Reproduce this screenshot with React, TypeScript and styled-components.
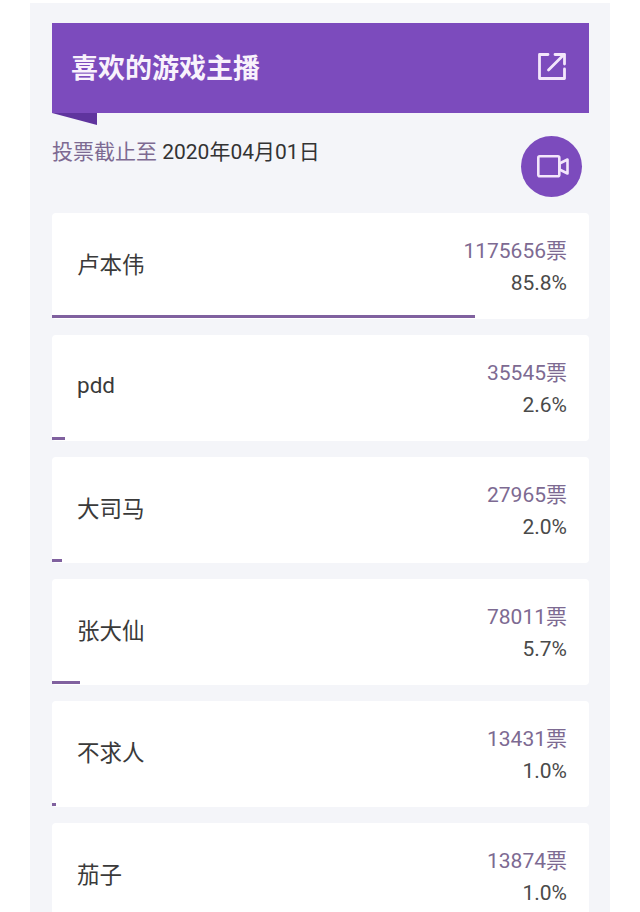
import React from "react";
import styled, { createGlobalStyle } from "styled-components";

const GlobalStyle = createGlobalStyle`
  html, body {
    margin: 0;
    padding: 0;
    background: #fff;
    overflow: hidden;
  }
  body {
    font-family: Roboto, "Noto Sans CJK SC", sans-serif;
  }
`;

const voteList = [
  { name: "卢本伟", votes: 1175656, percent: "85.8%", bar: 423 },
  { name: "pdd", votes: 35545, percent: "2.6%", bar: 13 },
  { name: "大司马", votes: 27965, percent: "2.0%", bar: 10 },
  { name: "张大仙", votes: 78011, percent: "5.7%", bar: 28 },
  { name: "不求人", votes: 13431, percent: "1.0%", bar: 4 },
  { name: "茄子", votes: 13874, percent: "1.0%", bar: 4 },
];

const App: React.FC = () => {
  return (
    <Page>
      <GlobalStyle />
      <Panel>
        <Banner>
          <BannerTitle>喜欢的游戏主播</BannerTitle>
          <ShareIcon width="30" height="29" viewBox="0 0 30 29" fill="none" stroke="#f3e6fb" strokeWidth="2.8" strokeLinecap="round" strokeLinejoin="round">
            <path d="M11 2.5H2.5v24h25V17" />
            <path d="M11.5 18L27 2.5" />
            <path d="M18 2.5h9.5V12" />
          </ShareIcon>
          <BannerTail />
        </Banner>
        <DeadlineRow>
          <Deadline>
            <DeadlineLabel>投票截止至</DeadlineLabel> 2020年04月01日
          </Deadline>
          <VideoButton>
            <VideoIcon width="33" height="23" viewBox="0 0 33 23" fill="none" stroke="#f3e6fb" strokeWidth="2.6" strokeLinejoin="round">
              <rect x="1.3" y="1.3" width="21" height="20" rx="1.5" />
              <path d="M22.5 8.5L30.5 4.5v14l-8-4z" />
            </VideoIcon>
          </VideoButton>
        </DeadlineRow>
        <CardList>
          {voteList.map((item) => (
            <Card key={item.name}>
              <Name>{item.name}</Name>
              <Stats>
                <Votes>{item.votes}票</Votes>
                <Percent>{item.percent}</Percent>
              </Stats>
              <Bar style={{ width: item.bar }} />
            </Card>
          ))}
        </CardList>
      </Panel>
    </Page>
  );
};

const Page = styled.div`
  width: 640px;
  height: 912px;
  overflow: hidden;
  padding: 3px 30px 0;
  box-sizing: border-box;
`;

const Panel = styled.div`
  background-color: #f4f5f9;
  padding: 20px 21px 0 22px;
  height: 100%;
  box-sizing: border-box;
`;

const Banner = styled.div`
  position: relative;
  height: 90px;
  background-color: #7c4bbd;
  display: flex;
  align-items: center;
  justify-content: space-between;
  padding: 0 22px 0 19px;
`;

const BannerTitle = styled.div`
  font-size: 27px;
  font-weight: 700;
  color: #f8f2fc;
  margin-top: -4px;
`;

const ShareIcon = styled.svg`
  margin-top: -3px;
`;

const BannerTail = styled.div`
  position: absolute;
  left: 0;
  top: 100%;
  width: 45px;
  height: 12px;
  background-color: #5f349e;
  clip-path: polygon(0 0, 100% 0, 100% 100%);
`;

const DeadlineRow = styled.div`
  height: 100px;
  display: flex;
  justify-content: space-between;
  align-items: flex-start;
  padding: 22px 7px 0 0;
  box-sizing: border-box;
`;

const Deadline = styled.div`
  font-size: 21px;
  line-height: 34px;
  color: #333;
`;

const DeadlineLabel = styled.span`
  color: #7d6a92;
`;

const VideoButton = styled.div`
  width: 61px;
  height: 61px;
  margin-top: 1px;
  border-radius: 50%;
  background-color: #7c4bbd;
  display: flex;
  align-items: center;
  justify-content: center;
`;

const VideoIcon = styled.svg`
  margin-left: 4px;
`;

const CardList = styled.div`
  display: flex;
  flex-direction: column;
  gap: 16px;
`;

const Card = styled.div`
  position: relative;
  flex: 0 0 106px;
  background-color: #fff;
  border-radius: 4px;
  display: flex;
  align-items: center;
  justify-content: space-between;
  padding: 0 22px 0 25px;
`;

const Name = styled.div`
  font-size: 22.5px;
  color: #3a3a3a;
  margin-top: -6px;
`;

const Stats = styled.div`
  text-align: right;
  margin-top: 2px;
`;

const Votes = styled.div`
  font-size: 21px;
  line-height: 32px;
  color: #7d6a92;
`;

const Percent = styled.div`
  font-size: 21px;
  line-height: 32px;
  color: #4a4a4a;
`;

const Bar = styled.div`
  position: absolute;
  left: 0;
  bottom: 1px;
  height: 3px;
  background-color: #80619f;
`;

export default App;
